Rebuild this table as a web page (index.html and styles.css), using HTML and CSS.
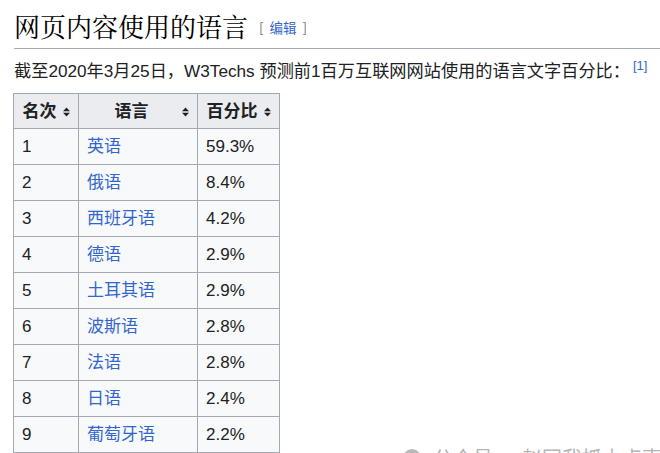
FILE: index.html
```html
<!DOCTYPE html>
<html lang="zh-CN">
<head>
<meta charset="utf-8">
<link rel="stylesheet" href="styles.css">
</head>
<body>
<div class="page">
  <h2 class="heading">
    <span class="heading-text">网页内容使用的语言</span>
    <span class="edit"><span class="bracket">[</span><a class="link">编辑</a><span class="bracket">]</span></span>
  </h2>
  <p class="lead">截至2020年3月25日，W3Techs 预测前1百万互联网网站使用的语言文字百分比：<sup class="ref">[1]</sup></p>
  <table class="wikitable">
    <colgroup><col class="c1"><col class="c2"><col class="c3"></colgroup>
    <thead>
      <tr>
        <th><span class="th-inner"><span class="th-label">名次</span><svg class="sort" viewBox="0 0 7 10" width="7" height="10"><path d="M3.5 0.5 L7 4.2 L0 4.2 Z M3.5 9.5 L7 5.8 L0 5.8 Z" fill="#202122"/></svg></span></th>
        <th><span class="th-inner"><span class="th-label">语言</span><svg class="sort" viewBox="0 0 7 10" width="7" height="10"><path d="M3.5 0.5 L7 4.2 L0 4.2 Z M3.5 9.5 L7 5.8 L0 5.8 Z" fill="#202122"/></svg></span></th>
        <th><span class="th-inner"><span class="th-label">百分比</span><svg class="sort" viewBox="0 0 7 10" width="7" height="10"><path d="M3.5 0.5 L7 4.2 L0 4.2 Z M3.5 9.5 L7 5.8 L0 5.8 Z" fill="#202122"/></svg></span></th>
      </tr>
    </thead>
    <tbody>
      <tr><td>1</td><td><a class="link">英语</a></td><td>59.3%</td></tr>
      <tr><td>2</td><td><a class="link">俄语</a></td><td>8.4%</td></tr>
      <tr><td>3</td><td><a class="link">西班牙语</a></td><td>4.2%</td></tr>
      <tr><td>4</td><td><a class="link">德语</a></td><td>2.9%</td></tr>
      <tr><td>5</td><td><a class="link">土耳其语</a></td><td>2.9%</td></tr>
      <tr><td>6</td><td><a class="link">波斯语</a></td><td>2.8%</td></tr>
      <tr><td>7</td><td><a class="link">法语</a></td><td>2.8%</td></tr>
      <tr><td>8</td><td><a class="link">日语</a></td><td>2.4%</td></tr>
      <tr><td>9</td><td><a class="link">葡萄牙语</a></td><td>2.2%</td></tr>
    </tbody>
  </table>
</div>
<div class="watermark">
  <span class="wm-icon"></span>
  <span class="wm-text">公众号 · 赵同我抓大点事</span>
</div>
</body>
</html>
```

FILE: styles.css
```css
html, body {
  margin: 0;
  padding: 0;
  background: #ffffff;
  overflow: hidden;
  height: 453px;
}

body {
  font-family: "Liberation Sans", "Noto Sans CJK SC", sans-serif;
  color: #202122;
  position: relative;
}

.page {
  padding-left: 14px;
}

.heading {
  margin: 0;
  padding: 7px 0 4px 0;
  line-height: 34px;
  font-weight: normal;
  border-bottom: 1px solid #a2a9b1;
  display: flex;
  align-items: center;
  gap: 11px;
}

.heading-text {
  font-family: "Noto Serif CJK SC", "Noto Sans CJK SC", serif;
  font-size: 26px;
  color: #000000;
}

.edit {
  font-family: "Noto Sans CJK SC", sans-serif;
  font-size: 13.5px;
  display: inline-flex;
  align-items: center;
  gap: 6px;
  padding-top: 3px;
}

.bracket {
  color: #72777d;
}

.link {
  color: #3366cc;
  text-decoration: none;
}

.lead {
  margin: 10px 0 0 0;
  font-size: 17.2px;
  line-height: 24px;
  white-space: nowrap;
}

.ref {
  font-size: 13px;
  color: #3366cc;
  margin-left: 3px;
  vertical-align: 7px;
  line-height: 1;
}

.wikitable {
  margin: 10px 0 0 -1px;
  border-collapse: collapse;
  table-layout: fixed;
  width: 266px;
  background: #f8f9fa;
  border: 1px solid #a2a9b1;
  font-size: 17px;
}

.c1 { width: 65px; }
.c2 { width: 119px; }
.c3 { width: 82px; }

.wikitable th,
.wikitable td {
  border: 1px solid #a2a9b1;
  padding: 6px 8px;
  line-height: 23px;
  text-align: left;
}

.wikitable th {
  background: #eaecf0;
  font-weight: bold;
  padding: 6px 8px 5px 8px;
}

.th-inner {
  display: flex;
  align-items: center;
}

.th-label {
  flex: 1;
  text-align: center;
}

.sort {
  flex: none;
  margin-left: 6px;
}

.watermark {
  position: absolute;
  left: 403px;
  top: 447px;
  display: flex;
  align-items: center;
  gap: 12px;
  color: #b5b5b5;
}

.wm-icon {
  width: 18px;
  height: 18px;
  border-radius: 50%;
  background: #b9b9b9;
}

.wm-text {
  font-family: "Noto Sans CJK SC", sans-serif;
  font-size: 20px;
  line-height: 22px;
  white-space: nowrap;
}
```
